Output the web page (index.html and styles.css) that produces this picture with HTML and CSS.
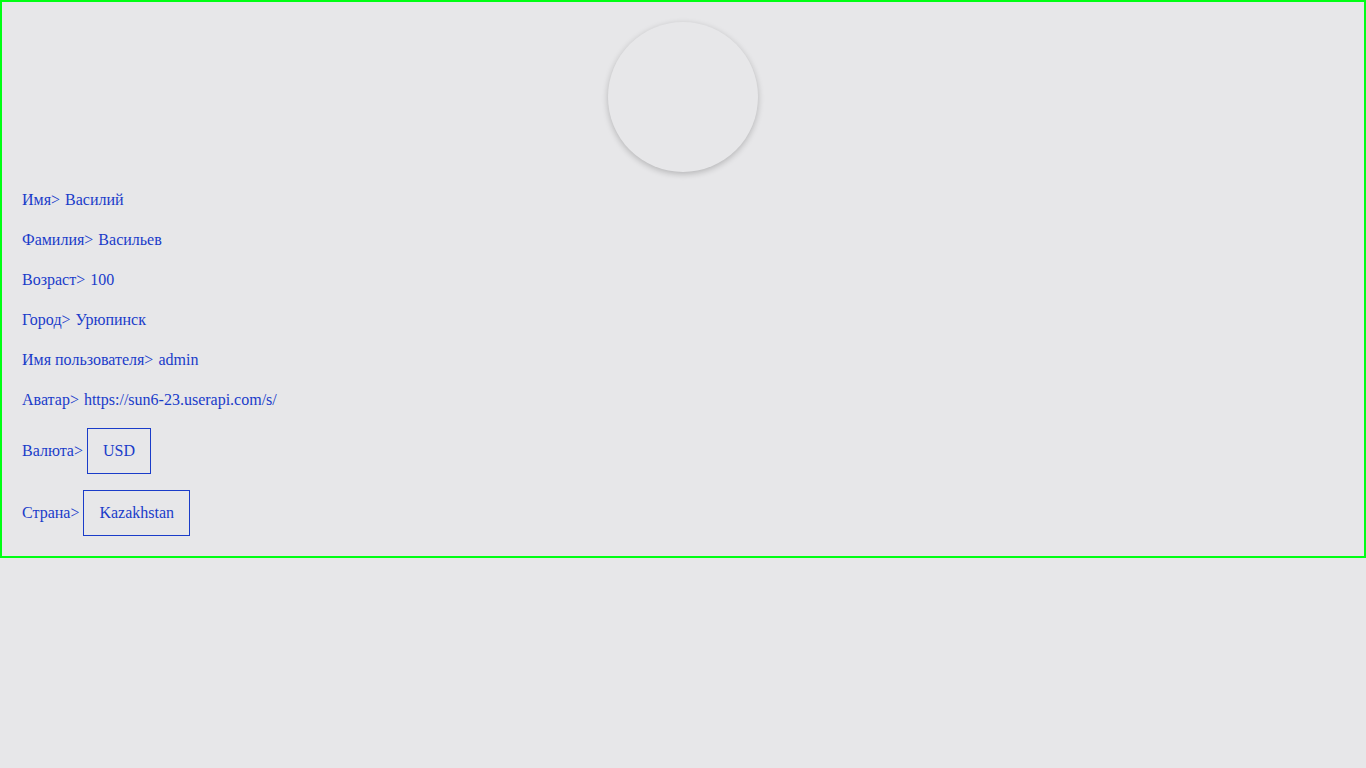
FILE: index.html
```html
<!DOCTYPE html>
<html lang="ru">
<head>
<meta charset="utf-8">
<title>Профиль</title>
<link rel="stylesheet" href="styles.css">
</head>
<body>
<div class="profile">
  <div class="avatar-wrap"><div class="avatar"></div></div>
  <div class="fields">
    <div class="row">Имя&gt; <span class="val">Василий</span></div>
    <div class="row">Фамилия&gt; <span class="val">Васильев</span></div>
    <div class="row">Возраст&gt; <span class="val">100</span></div>
    <div class="row">Город&gt; <span class="val">Урюпинск</span></div>
    <div class="row">Имя пользователя&gt; <span class="val">admin</span></div>
    <div class="row">Аватар&gt; <span class="val">https://sun6-23.userapi.com/s/</span></div>
    <div class="row row-box">Валюта&gt; <span class="box">USD</span></div>
    <div class="row row-box row-box-next">Страна&gt; <span class="box">Kazakhstan</span></div>
  </div>
</div>
</body>
</html>
```
FILE: styles.css
```css
html, body {
  margin: 0;
  padding: 0;
  background: #e7e7e9;
}
body {
  font-family: "Liberation Serif", "Times New Roman", serif;
  font-size: 16px;
  color: #1a3cc9;
}
.profile {
  border: 2px solid #00ff14;
  padding: 20px;
}
.avatar-wrap {
  display: flex;
  justify-content: center;
}
.avatar {
  width: 150px;
  height: 150px;
  border-radius: 50%;
  background: #e7e7e9;
  box-shadow: 0 2px 6px rgba(0, 0, 0, 0.22);
}
.fields {
  display: flex;
  flex-direction: column;
  gap: 20px;
  margin-top: 18px;
}
.row {
  line-height: 20px;
  display: flex;
  align-items: center;
  white-space: pre;
}
.val {
  margin-left: 1px;
}
.row-box {
  margin-top: -2px;
}
.row-box-next {
  margin-top: -4px;
}
.box {
  display: inline-block;
  border: 1px solid #1a3cc9;
  padding: 13px 15px;
  line-height: 18px;
}
```
